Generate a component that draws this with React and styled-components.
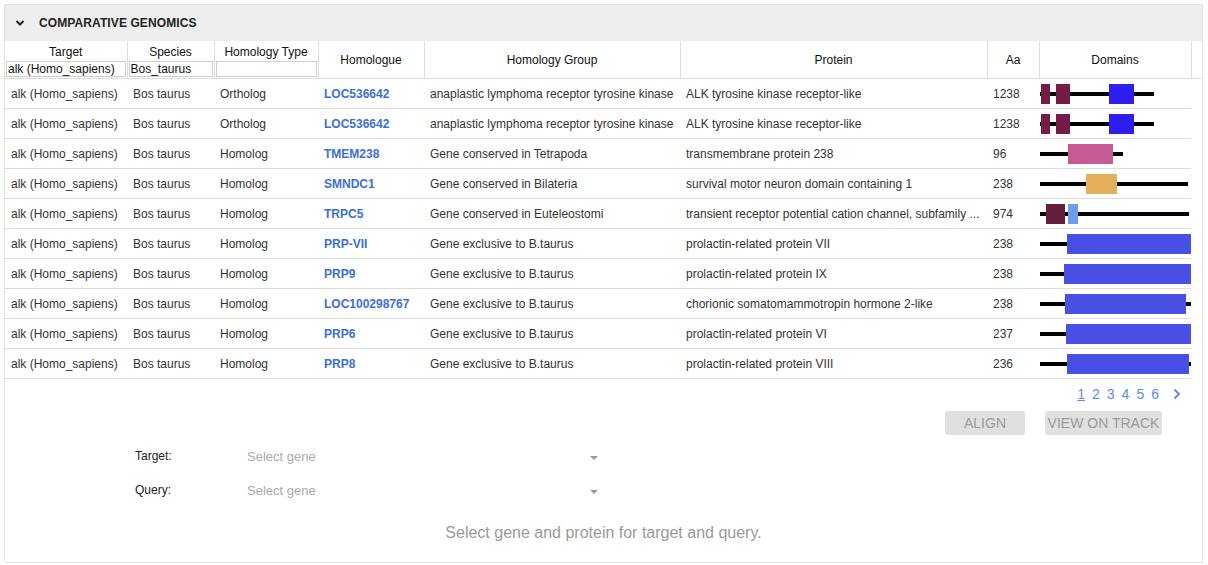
import React from "react";
import styled, { createGlobalStyle } from "styled-components";

const Global = createGlobalStyle`
  body {
    margin: 0;
    padding: 4px;
    background: #fff;
    font-family: "Liberation Sans", Arial, sans-serif;
  }
`;

const Panel = styled.div`
  width: 1199px;
  height: 559px;
  box-sizing: border-box;
  border: 1px solid #e2e2e2;
  border-radius: 2px;
  display: flex;
  flex-direction: column;
`;

const PanelHead = styled.div`
  height: 36px;
  background: #eeeeee;
  display: flex;
  align-items: center;
  padding-left: 10px;
  gap: 14px;
  font-size: 12px;
  font-weight: bold;
  color: #222;
  letter-spacing: 0.1px;
`;

const Table = styled.table`
  border-collapse: collapse;
  table-layout: fixed;
  width: 1197px;
  font-size: 12px;
  color: #333;
`;

const Th = styled.th`
  font-weight: normal;
  color: #111;
  border: 1px solid #dddddd;
  border-top: none;
  border-left: ${(p) => (p.first ? "none" : "1px solid #dddddd")};
  border-right: ${(p) => (p.last ? "none" : "1px solid #dddddd")};
  height: 37px;
  padding: 0 1px;
  vertical-align: ${(p) => (p.filter ? "top" : "middle")};
  text-align: center;
`;

const ThLabel = styled.div`
  padding-top: 4px;
  height: 16px;
`;

const Filter = styled.input`
  display: block;
  box-sizing: border-box;
  width: 100%;
  height: 16px;
  margin: 0;
  border: 1px solid #cfcfcf;
  padding: 0 1px;
  font: 12px "Liberation Sans", Arial, sans-serif;
  color: #111;
  outline: none;
`;

const Td = styled.td`
  height: 29px;
  padding: 0 6px;
  border-bottom: 1px solid #dddddd;
  white-space: nowrap;
  overflow: hidden;
`;

const Gutter = styled.td`
  border: none;
`;

const DomainTd = styled.td`
  height: 29px;
  padding: 0 0 0 1px;
  border-bottom: 1px solid #dddddd;
  vertical-align: middle;
`;

const Link = styled.a`
  color: #3c6fd6;
  font-weight: bold;
  text-decoration: none;
`;

const Footer = styled.div`
  display: flex;
  flex-direction: column;
  flex: 1;
`;

const Pager = styled.div`
  display: flex;
  justify-content: flex-end;
  align-items: center;
  gap: 7px;
  padding: 6px 20px 0 0;
  height: 18px;
  font-size: 14px;
  color: #5b8def;
`;

const Page = styled.span`
  text-decoration: ${(p) => (p.active ? "underline" : "none")};
  cursor: pointer;
`;

const Actions = styled.div`
  display: flex;
  justify-content: flex-end;
  gap: 20px;
  padding: 8px 40px 0 0;
`;

const Btn = styled.button`
  height: 24px;
  padding: 0;
  width: ${(p) => p.w}px;
  border: none;
  border-radius: 3px;
  background: #e0e0e0;
  color: #9a9a9a;
  font: 14px "Liberation Sans", Arial, sans-serif;
  white-space: nowrap;
`;

const Form = styled.div`
  display: grid;
  grid-template-columns: 112px 353px;
  row-gap: 15px;
  padding: 12px 0 0 130px;
  font-size: 12px;
`;

const Label = styled.div`
  color: #222;
  height: 19px;
  line-height: 19px;
`;

const Select = styled.div`
  display: flex;
  justify-content: space-between;
  align-items: center;
  height: 19px;
  font-size: 13px;
  color: #aaaaaa;
`;

const Caret = styled.span`
  width: 0;
  height: 0;
  border-left: 4px solid transparent;
  border-right: 4px solid transparent;
  border-top: 4px solid #999;
  margin-right: 2px;
  margin-top: 3px;
`;

const Message = styled.div`
  text-align: center;
  font-size: 16px;
  color: #9a9a9a;
  padding-top: 24px;
`;

const C = {
  maroon: "#741b47",
  blue: "#2e1ff0",
  pink: "#c55a95",
  orange: "#e3af5a",
  dark: "#63203c",
  light: "#6d9eeb",
  royal: "#4a50e6",
};

const rows = [
  ["LOC536642", "Ortholog", "anaplastic lymphoma receptor tyrosine kinase", "ALK tyrosine kinase receptor-like", 1238, 114, [[1, 10, C.maroon], [16, 30, C.maroon], [69, 94, C.blue]]],
  ["LOC536642", "Ortholog", "anaplastic lymphoma receptor tyrosine kinase", "ALK tyrosine kinase receptor-like", 1238, 114, [[1, 10, C.maroon], [16, 30, C.maroon], [69, 94, C.blue]]],
  ["TMEM238", "Homolog", "Gene conserved in Tetrapoda", "transmembrane protein 238", 96, 83, [[28, 73, C.pink]]],
  ["SMNDC1", "Homolog", "Gene conserved in Bilateria", "survival motor neuron domain containing 1", 238, 148, [[46, 77, C.orange]]],
  ["TRPC5", "Homolog", "Gene conserved in Euteleostomi", "transient receptor potential cation channel, subfamily ...", 974, 149, [[6, 25, C.dark], [28, 38, C.light]]],
  ["PRP-VII", "Homolog", "Gene exclusive to B.taurus", "prolactin-related protein VII", 238, 151, [[27, 151, C.royal]]],
  ["PRP9", "Homolog", "Gene exclusive to B.taurus", "prolactin-related protein IX", 238, 151, [[24, 151, C.royal]]],
  ["LOC100298767", "Homolog", "Gene exclusive to B.taurus", "chorionic somatomammotropin hormone 2-like", 238, 151, [[25, 146, C.royal]]],
  ["PRP6", "Homolog", "Gene exclusive to B.taurus", "prolactin-related protein VI", 237, 151, [[26, 151, C.royal]]],
  ["PRP8", "Homolog", "Gene exclusive to B.taurus", "prolactin-related protein VIII", 236, 151, [[27, 149, C.royal]]],
];

function Domains({ len, boxes }) {
  return (
    <svg width="151" height="22" viewBox="0 0 151 22" style={{ display: "block" }}>
      <rect x="0" y="9" width={len} height="4" fill="#000" />
      {boxes.map(([a, b, c], i) => (
        <rect key={i} x={a} y="1" width={b - a} height="20" fill={c} />
      ))}
    </svg>
  );
}

function Chevron() {
  return (
    <svg width="10" height="8" viewBox="0 0 10 8">
      <path d="M1.5 2 L5 5.5 L8.5 2" fill="none" stroke="#222" strokeWidth="2" />
    </svg>
  );
}

function NextArrow() {
  return (
    <svg width="10" height="12" viewBox="0 0 10 12" style={{ marginLeft: 6 }}>
      <path d="M2.5 1.5 L7 6 L2.5 10.5" fill="none" stroke="#5b8def" strokeWidth="2" />
    </svg>
  );
}

export default function App() {
  return (
    <>
      <Global />
      <Panel>
        <PanelHead>
          <Chevron />
          COMPARATIVE GENOMICS
        </PanelHead>
        <Table>
          <colgroup>
            <col style={{ width: 122 }} />
            <col style={{ width: 87 }} />
            <col style={{ width: 104 }} />
            <col style={{ width: 106 }} />
            <col style={{ width: 256 }} />
            <col style={{ width: 307 }} />
            <col style={{ width: 52 }} />
            <col style={{ width: 152 }} />
            <col style={{ width: 11 }} />
          </colgroup>
          <thead>
            <tr>
              <Th filter first>
                <ThLabel>Target</ThLabel>
                <Filter defaultValue="alk (Homo_sapiens)" />
              </Th>
              <Th filter>
                <ThLabel>Species</ThLabel>
                <Filter defaultValue="Bos_taurus" />
              </Th>
              <Th filter>
                <ThLabel>Homology Type</ThLabel>
                <Filter defaultValue="" />
              </Th>
              <Th>Homologue</Th>
              <Th>Homology Group</Th>
              <Th>Protein</Th>
              <Th>Aa</Th>
              <Th>Domains</Th>
              <Th last />
            </tr>
          </thead>
          <tbody>
            {rows.map(([gene, type, group, protein, aa, len, boxes], i) => (
              <tr key={i}>
                <Td>alk (Homo_sapiens)</Td>
                <Td>Bos taurus</Td>
                <Td>{type}</Td>
                <Td>
                  <Link href="#">{gene}</Link>
                </Td>
                <Td>{group}</Td>
                <Td>{protein}</Td>
                <Td>{aa}</Td>
                <DomainTd>
                  <Domains len={len} boxes={boxes} />
                </DomainTd>
                <Gutter />
              </tr>
            ))}
          </tbody>
        </Table>
        <Footer>
          <Pager>
            <Page active>1</Page>
            <Page>2</Page>
            <Page>3</Page>
            <Page>4</Page>
            <Page>5</Page>
            <Page>6</Page>
            <NextArrow />
          </Pager>
          <Actions>
            <Btn w={80}>ALIGN</Btn>
            <Btn w={117}>VIEW ON TRACK</Btn>
          </Actions>
          <Form>
            <Label>Target:</Label>
            <Select>
              Select gene
              <Caret />
            </Select>
            <Label>Query:</Label>
            <Select>
              Select gene
              <Caret />
            </Select>
          </Form>
          <Message>Select gene and protein for target and query.</Message>
        </Footer>
      </Panel>
    </>
  );
}
